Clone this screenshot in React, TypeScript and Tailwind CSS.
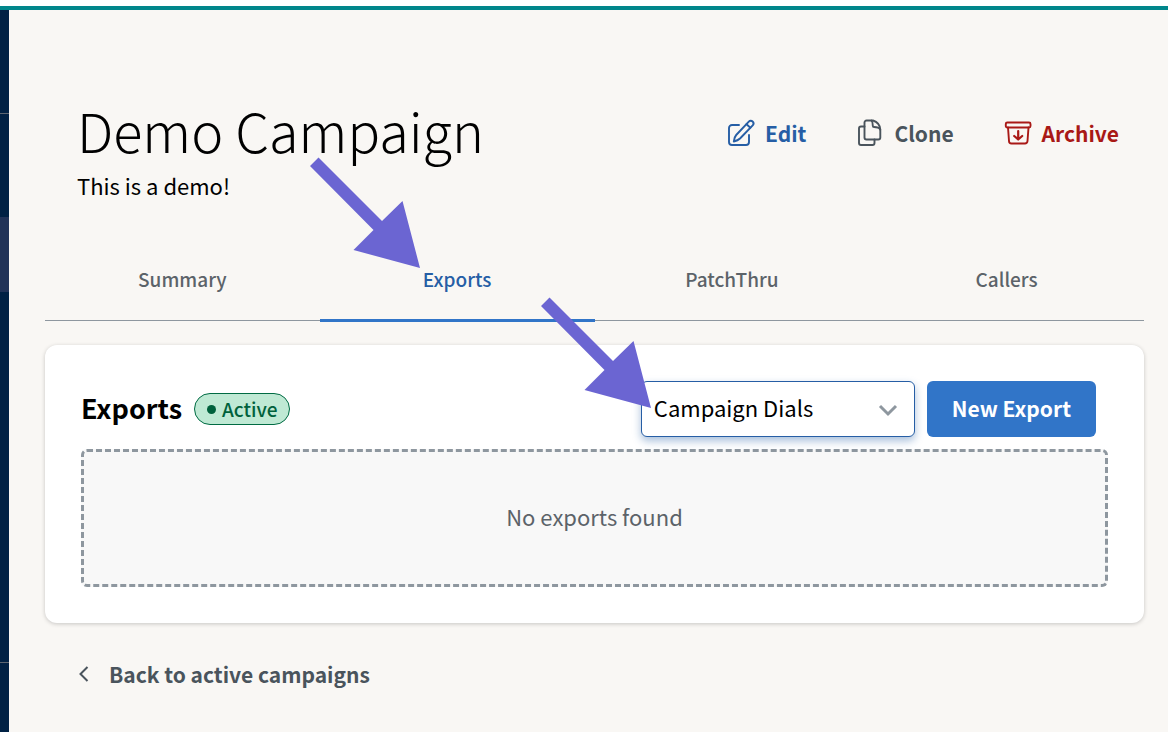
import React, { useState } from 'react'

const tabs = ["Summary", "Exports", "PatchThru", "Callers"]

function EditIcon() {
  return (
    <svg width="28" height="28" viewBox="0 0 28 28" fill="none" stroke="currentColor" strokeWidth="1.9" strokeLinecap="round" strokeLinejoin="round" aria-hidden="true">
      <path d="M12 6H5a3 3 0 0 0-3 3v14a3 3 0 0 0 3 3h14a3 3 0 0 0 3-3V16" />
      <path d="M21.800 2.600a2.600 2.600 0 0 1 3.900 3.700L13 19.500c-1.500 1.400-3.800 2.400-6.200 3 .2-2.400 1-4.900 2.400-6.500z" />
      <path d="M19.500 5.200l3.900 3.500" />
    </svg>
  )
}

function CloneIcon() {
  return (
    <svg width="28" height="28" viewBox="0 0 28 28" fill="none" stroke="currentColor" strokeWidth="1.9" strokeLinecap="round" strokeLinejoin="round" aria-hidden="true">
      <path d="M10.500 1.500h6.500c4.500 1.500 7 5 7.300 9v8a2 2 0 0 1-2 2H10.500a2 2 0 0 1-2-2v-15a2 2 0 0 1 2-2z" />
      <path d="M15.500 1.600c1.300 1.200 1.300 2.900 1.300 5.100 0 .9.300 1.300 1.200 1.300 2.500 0 5 .2 6.200 2.500" />
      <path d="M8.500 7.500H5a2 2 0 0 0-2 2V24a2 2 0 0 0 2 2h11.500a2 2 0 0 0 2-2v-3.500" />
    </svg>
  )
}

function ArchiveIcon() {
  return (
    <svg width="28" height="28" viewBox="0 0 28 28" fill="none" stroke="currentColor" strokeWidth="1.9" strokeLinecap="round" strokeLinejoin="round" aria-hidden="true">
      <rect x="1.800" y="3.500" width="24.700" height="5" rx="1.500" />
      <path d="M4 8.500l1 13.500a2.500 2.500 0 0 0 2.500 2.500h13.500a2.500 2.500 0 0 0 2.500-2.500l1-13.500" />
      <path d="M14.200 12v8M10.200 17l4 3.500 4-3.500" strokeWidth="2.200" />
    </svg>
  )
}

export default function Campaign() {
  const [tab, setTab] = useState("Exports")
  const [exportType, setExportType] = useState("Campaign Dials")

  return (
    <div className="relative flex min-h-screen flex-col overflow-hidden bg-[#f9f7f4] font-['Noto_Sans_CJK_SC',sans-serif] text-[22px] leading-8 text-black">
      <div className="h-[10px] border-b-4 border-[#00868b] bg-white" />

      <div className="flex flex-1">
        <aside className="flex w-[9px] shrink-0 flex-col bg-[#002144]">
          <div className="h-[104px] border-b border-[#5c6672]" />
          <div className="mt-[103px] h-[75px] bg-[#213358]" />
          <div className="mt-[370px] border-t border-[#5c6672]" />
        </aside>

        <main className="min-w-0 flex-1 pr-6 pl-9">
          <header className="flex items-start justify-between pt-[84px] pr-[25px] pl-8">
            <div>
              <h1 className="text-[54px] leading-[72px] font-light">Demo Campaign</h1>
              <p className="mt-[3px]">This is a demo!</p>
            </div>
            <div className="flex items-center gap-[50px] pt-[23px] text-[21px] font-bold">
              <button type="button" className="flex items-center gap-[10px] text-[#265ea5]">
                <EditIcon />
                Edit
              </button>
              <button type="button" className="flex items-center gap-[10px] text-[#4a545c]">
                <CloneIcon />
                Clone
              </button>
              <button type="button" className="flex items-center gap-[10px] text-[#a91916]">
                <ArchiveIcon />
                Archive
              </button>
            </div>
          </header>

          <nav className="mt-[39px] flex h-[81px] border-b border-[#8e979f]">
            {tabs.map((name) => (
              <button
                key={name}
                type="button"
                onClick={() => setTab(name)}
                className={
                  name === tab
                    ? "-mb-[2px] flex-1 border-b-[3px] border-[#3175c8] pb-[2px] text-[19px] font-medium text-[#265ea5]"
                    : "-mb-[2px] flex-1 border-b-[3px] border-transparent pb-[2px] text-[19px] font-medium text-[#5c6369]"
                }
              >
                {name}
              </button>
            ))}
          </nav>

          <section className="mt-6 rounded-xl bg-white p-9 shadow-[0_1px_4px_rgba(0,0,0,0.2)]">
            <div className="flex items-center justify-between pr-3">
              <div className="flex items-center gap-3">
                <h2 className="pb-[2px] text-[27px] font-bold">Exports</h2>
                <span className="flex h-8 items-center gap-[6px] rounded-full border border-[#006b43] bg-[#bfe9d4] px-3 text-[19px] font-medium text-[#00613c]">
                  <span className="size-[9px] rounded-full bg-[#00613c]" />
                  Active
                </span>
              </div>
              <div className="flex gap-3">
                <div className="relative">
                  <select
                    aria-label="Export type"
                    value={exportType}
                    onChange={(e) => setExportType(e.target.value)}
                    className="h-14 w-[274px] appearance-none rounded-md border border-[#265ea5] bg-white px-3 pb-1 shadow-[0_4px_8px_rgba(38,94,165,0.4)]"
                  >
                    <option>Campaign Dials</option>
                  </select>
                  <svg className="pointer-events-none absolute top-5 right-4" width="22" height="20" viewBox="0 0 22 20" fill="none" stroke="#8e979f" strokeWidth="3" aria-hidden="true">
                    <path d="M3 5l8 8 8-8" />
                  </svg>
                </div>
                <button type="button" className="h-14 rounded-md bg-[#3175c8] px-[25px] pb-[3px] text-[21px] font-bold text-white">
                  New Export
                </button>
              </div>
            </div>

            <div className="mt-3 flex h-[138px] items-center justify-center rounded-md border-3 border-dashed border-[#8e979f] bg-[#f8f8f8] pb-1 text-[#5c6369]">
              No exports found
            </div>
          </section>

          <a href="#campaigns" className="mt-[35px] mb-10 ml-[33px] inline-flex items-center gap-[18px] text-[21px] font-bold text-[#4a545c]">
            <svg width="13" height="18" viewBox="0 0 13 18" fill="none" stroke="currentColor" strokeWidth="2" aria-hidden="true">
              <path d="M9.500 2L2.500 9l7 7" />
            </svg>
            Back to active campaigns
          </a>
        </main>
      </div>

      {/* pointers laid over the page */}
      <svg className="pointer-events-none absolute top-0 left-0" width="1168" height="732" viewBox="0 0 1168 732" fill="#6b65d2" aria-hidden="true">
        <path id="arrow" d="M318.500 157.500L382 221l20.500-20L420 268l-66.500-18 20-20L310 166z" />
        <use href="#arrow" x="231" y="140" />
      </svg>
    </div>
  )
}
